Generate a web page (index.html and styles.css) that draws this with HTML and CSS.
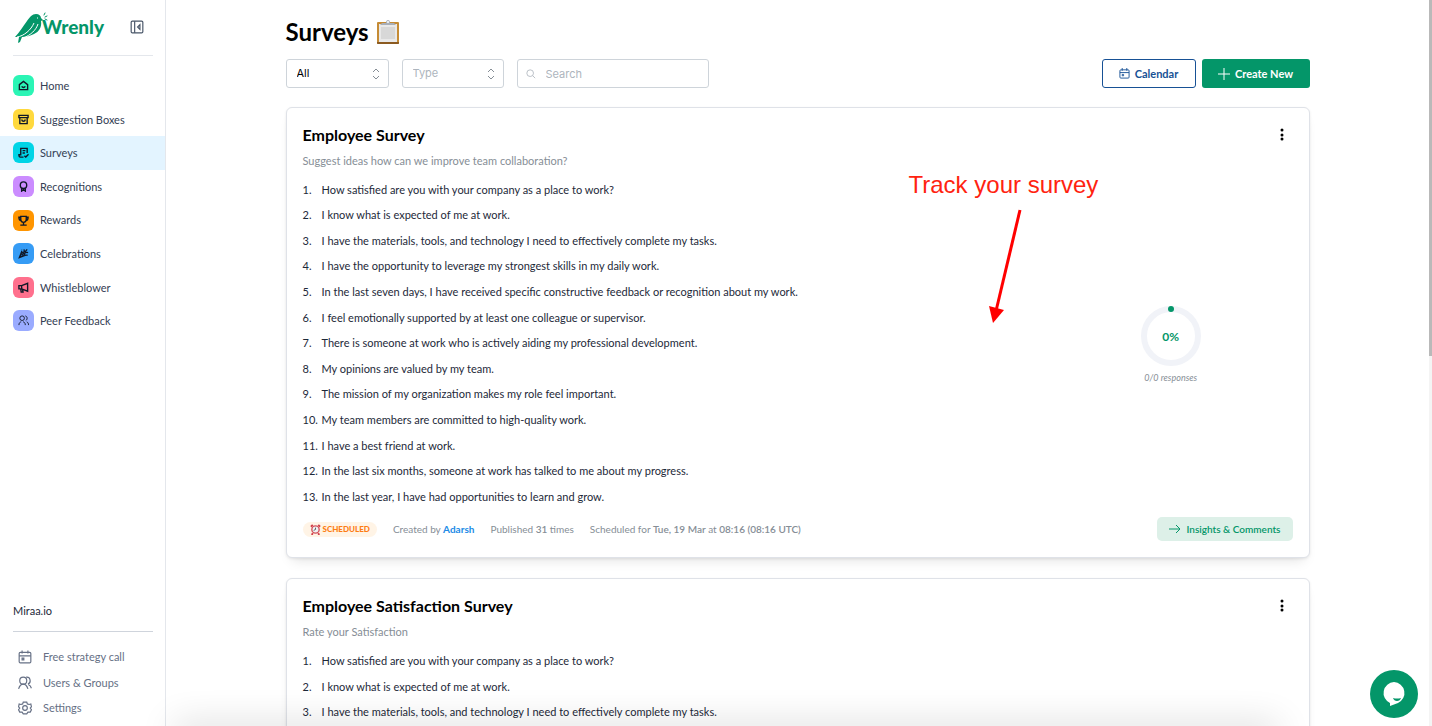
FILE: index.html
```
<!DOCTYPE html>
<html lang="en">
<head>
    <meta charset="UTF-8">
    <meta name="viewport" content="width=device-width, initial-scale=1.0">
    <title>Surveys - Wrenly</title>
    <link rel="stylesheet" href="styles.css">
</head>
<body>
    <aside class="sidebar">
        <div class="sidebar-header">
            <a href="#" class="logo">
                <svg class="logo-bird" viewBox="0 0 34 34" width="34" height="34">
                    <path fill="#049669" d="M1 27C6 22 9 16 13 11C16 7 18 4 22 4C25 4 27 6 27 8L29 10L27 11C28 17 25 22 20 24C16 26 12 27 8 27L6 32L4 33L5 27Z"/>
                    <path fill="none" stroke="#fff" stroke-width="1" d="M3 27C10 26 17 20 20 13M9 28C17 25 22 20 24 14"/>
                    <path fill="none" stroke="#fff" stroke-width="1" d="M23 8h1"/>
                    <path fill="none" stroke="#049669" stroke-width="1" stroke-linecap="round" d="M30 5L31 3M31 7L33 6M31 9L33 10"/>
                </svg>
                <span>Wrenly</span>
            </a>
            <button class="collapse" aria-label="Collapse sidebar">
                <svg class="line-icon" viewBox="0 0 24 24" width="14" height="14"><rect x="2" y="2" width="20" height="20" rx="2"/><path d="M8 2v20M17 8l-4 4 4 4z"/></svg>
            </button>
        </div>
        <nav class="menu">
            <a href="#"><span class="tile home"><svg class="line-icon" viewBox="0 0 24 24"><path d="M3 10L12 3l9 7v11H3zM8 14c2 3 6 3 8 0"/></svg></span>Home</a>
            <a href="#"><span class="tile boxes"><svg class="line-icon" viewBox="0 0 24 24"><path d="M2 3h20v5H2zM4 8v13h16V8M8 12c1 5 7 5 8 0"/></svg></span>Suggestion Boxes</a>
            <a href="#" class="active"><span class="tile surveys"><svg class="line-icon" viewBox="0 0 24 24"><path d="M20 13V3H6v14H2c0 3 1 5 3 5h7M10 8h6M10 13h5M14 19l3 3 6-6"/></svg></span>Surveys</a>
            <a href="#"><span class="tile recognitions"><svg class="line-icon" viewBox="0 0 24 24"><circle cx="12" cy="9" r="7"/><path d="M8 15v7l4-3 4 3v-7"/></svg></span>Recognitions</a>
            <a href="#"><span class="tile rewards"><svg class="line-icon" viewBox="0 0 24 24"><path d="M6 3h12v7a6 6 0 0 1-12 0zM6 5H2c0 5 1 7 5 7M18 5h4c0 5-1 7-5 7M12 16v5M5 22h14"/></svg></span>Rewards</a>
            <a href="#"><span class="tile celebrations"><svg class="line-icon" viewBox="0 0 24 24"><path d="M8 8L3 21l13-5zM7 12l5 5M5 16l3 3M12 10c2-2 2-4 1-7M14 12c3-3 5-3 8-2M15 9l5-6M18 15l3 1M8 4h1"/></svg></span>Celebrations</a>
            <a href="#"><span class="tile whistle"><svg class="line-icon" viewBox="0 0 24 24"><path d="M2 8v7h6l13 5V3L8 8zM8 8v7M6 15l1 7h4l-1-6"/></svg></span>Whistleblower</a>
            <a href="#"><span class="tile peer"><svg class="line-icon thin" viewBox="0 0 24 24"><circle cx="9" cy="7" r="5"/><path d="M2 22c0-5 3-7 5-7M16 22c0-5-3-7-5-7M16 2c5 1 5 8 1 10M19 15c3 1 4 4 4 7"/></svg></span>Peer Feedback</a>
        </nav>
        <div class="company">Miraa.io</div>
        <nav class="submenu">
            <a href="#"><svg class="line-icon" viewBox="0 0 24 24"><rect x="2" y="4" width="20" height="18" rx="2"/><path d="M2 10h20M7 1v5M17 1v5M7 14h3v3H7z"/></svg>Free strategy call</a>
            <a href="#"><svg class="line-icon" viewBox="0 0 24 24"><circle cx="9" cy="8" r="6"/><path d="M1 22c2-6 5-8 8-8s6 2 8 8M14 2c8-1 9 10 3 12M18 15c3 1 4 3 5 6"/></svg>Users &amp; Groups</a>
            <a href="#"><svg class="line-icon" viewBox="0 0 24 24"><path d="M9 2h6l1 3 3 1 3-1 1 5-2 2 2 3-2 4-4 0-2 3H9l-2-3-4 0-2-4 2-3-2-2 1-5 3 1 3-1z"/><circle cx="12" cy="12" r="4"/></svg>Settings</a>
        </nav>
    </aside>

    <main>
        <div class="content">
            <h1>Surveys
                <svg viewBox="0 0 22 24" width="22" height="24">
                    <rect x="0" y="2" width="22" height="22" rx="1" fill="#c58b35"/>
                    <path fill="#8b5a20" d="M0 22h22v1q0 1-1 1H1q-1 0-1-1z"/>
                    <rect x="2" y="4" width="18" height="18" fill="#e9e9e9"/>
                    <rect x="4" y="7" width="14" height="12" fill="#d8d8d8"/>
                    <path fill="#a9afb8" d="M3 5l2-2h4q0-3 2-3t2 3h4l2 2z"/>
                    <circle cx="11" cy="2" r="1" fill="#fff"/>
                </svg>
            </h1>
            <div class="toolbar">
                <div class="field select">
                    <select aria-label="Status"><option>All</option></select>
                    <svg class="line-icon" viewBox="0 0 8 12" width="8" height="12"><path d="M1 4l3-3 3 3M1 8l3 3 3-3"/></svg>
                </div>
                <div class="field select empty">
                    <select aria-label="Type"><option>Type</option></select>
                    <svg class="line-icon" viewBox="0 0 8 12" width="8" height="12"><path d="M1 4l3-3 3 3M1 8l3 3 3-3"/></svg>
                </div>
                <div class="field search">
                    <svg class="line-icon" viewBox="0 0 12 12" width="10" height="10"><circle cx="5" cy="5" r="4"/><path d="M8 8l3 3"/></svg>
                    <input type="text" placeholder="Search" aria-label="Search">
                </div>
                <button class="btn outline">
                    <svg class="line-icon" viewBox="0 0 24 24" width="11" height="11"><rect x="2" y="4" width="20" height="18" rx="2"/><path d="M2 10h20M7 0v6M17 0v6M7 14h3v3H7z"/></svg>
                    Calendar
                </button>
                <button class="btn primary">
                    <svg class="line-icon" viewBox="0 0 12 12" width="12" height="12"><path d="M6 0v12M0 6h12"/></svg>
                    Create New
                </button>
            </div>

            <section class="card">
                <div class="card-header">
                    <h2>Employee Survey</h2>
                    <button class="more" aria-label="More options"><svg viewBox="0 0 4 14" width="4" height="14"><circle cx="2" cy="2" r="1.500"/><circle cx="2" cy="7" r="1.500"/><circle cx="2" cy="11" r="1.500"/></svg></button>
                </div>
                <p class="description">Suggest ideas how can we improve team collaboration?</p>
                <div class="card-body">
                    <ol>
                        <li>How satisfied are you with your company as a place to work?</li>
                        <li>I know what is expected of me at work.</li>
                        <li>I have the materials, tools, and technology I need to effectively complete my tasks.</li>
                        <li>I have the opportunity to leverage my strongest skills in my daily work.</li>
                        <li>In the last seven days, I have received specific constructive feedback or recognition about my work.</li>
                        <li>I feel emotionally supported by at least one colleague or supervisor.</li>
                        <li>There is someone at work who is actively aiding my professional development.</li>
                        <li>My opinions are valued by my team.</li>
                        <li>The mission of my organization makes my role feel important.</li>
                        <li>My team members are committed to high-quality work.</li>
                        <li>I have a best friend at work.</li>
                        <li>In the last six months, someone at work has talked to me about my progress.</li>
                        <li>In the last year, I have had opportunities to learn and grow.</li>
                    </ol>
                    <div class="progress">
                        <div class="ring">
                            <svg viewBox="0 0 60 60" width="60" height="60"><circle cx="30" cy="30" r="27" fill="none" stroke="#f1f3f8" stroke-width="6"/><circle cx="30" cy="3" r="3" fill="#049669"/></svg>
                            <strong>0%</strong>
                        </div>
                        <em>0/0 responses</em>
                    </div>
                </div>
                <div class="card-footer">
                    <span class="badge">
                        <svg viewBox="0 0 12 12" width="11" height="11"><path d="M1 3l2-2M11 3L9 1M3 10l-1 2M9 10l1 2" stroke="#d33f49" stroke-width="2"/><circle cx="6" cy="6" r="4" fill="#eef2f4" stroke="#d3535c" stroke-width="1.500"/><path d="M6 4v2l-2 1" fill="none" stroke="#555"/></svg>
                        SCHEDULED
                    </span>
                    <span>Created by <a href="#">Adarsh</a></span>
                    <span>Published <b>31</b> times</span>
                    <span>Scheduled for <b>Tue, 19 Mar</b> at <b>08:16 (08:16 UTC)</b></span>
                    <button class="insights">
                        <svg class="line-icon" viewBox="0 0 12 10" width="12" height="10"><path d="M0 5h11M7 1l4 4-4 4"/></svg>
                        Insights &amp; Comments
                    </button>
                </div>
                <div class="annotation">
                    <span>Track your survey</span>
                    <svg viewBox="0 0 34 114" width="34" height="114"><path d="M31 1L7 102" stroke="#f00" stroke-width="3"/><path d="M0 97l15 4-11 13z" fill="#f00"/></svg>
                </div>
            </section>

            <section class="card">
                <div class="card-header">
                    <h2>Employee Satisfaction Survey</h2>
                    <button class="more" aria-label="More options"><svg viewBox="0 0 4 14" width="4" height="14"><circle cx="2" cy="2" r="1.500"/><circle cx="2" cy="7" r="1.500"/><circle cx="2" cy="11" r="1.500"/></svg></button>
                </div>
                <p class="description">Rate your Satisfaction</p>
                <div class="card-body">
                    <ol>
                        <li>How satisfied are you with your company as a place to work?</li>
                        <li>I know what is expected of me at work.</li>
                        <li>I have the materials, tools, and technology I need to effectively complete my tasks.</li>
                    </ol>
                </div>
            </section>
        </div>
    </main>
    <div class="scrollbar"><div class="thumb"></div></div>

    <div class="bottom-shade"></div>
    <button class="chat" aria-label="Open chat">
        <svg viewBox="0 0 24 26" width="24" height="26"><path fill="#fff" d="M12 1a11 11 0 0 1 4 21l-8 3v-3A11 11 0 0 1 12 1z"/><path fill="#049669" d="M11 17q4 1 8 0-1 3-4 3-3 0-4-3z"/></svg>
    </button>
</body>
</html>
```
FILE: styles.css
```
* {
    box-sizing: border-box;
}

body {
    display: flex;
    height: 100vh;
    margin: 0;
    overflow: hidden;
    font-family: Lato, "Liberation Sans", sans-serif;
    font-size: 12px;
    line-height: 1.6;
    color: #1d2939;
    background-color: #fff;
}

h1, h2, p, ol {
    margin: 0;
    padding: 0;
}

a {
    color: inherit;
    text-decoration: none;
}

b {
    font-weight: 600;
}

button, input, select {
    font: inherit;
    color: inherit;
}

button {
    padding: 0;
    border: none;
    background: none;
    cursor: pointer;
}

svg {
    display: block;
    flex-shrink: 0;
}

.line-icon {
    fill: none;
    stroke: currentColor;
    stroke-width: 2;
}

/* sidebar */
.sidebar {
    display: flex;
    flex-direction: column;
    flex-shrink: 0;
    width: 166px;
    padding-bottom: 9px;
    border-right: 1px solid #e4e7ec;
}

.sidebar-header {
    display: flex;
    justify-content: space-between;
    align-items: center;
    height: 56px;
    margin: 0 12px 13px 13px;
    padding: 0 9px 2px 1px;
    border-bottom: 1px solid #e4e7ec;
}

.logo {
    display: flex;
    align-items: center;
    font-size: 19px;
    font-weight: 900;
    line-height: 24px;
    color: #049669;
}

.logo-bird {
    margin-right: -6px;
}

.collapse {
    color: #475467;
}

.menu {
    font-size: 11px;
    color: #344054;
}

.menu a {
    display: flex;
    align-items: center;
    gap: 6px;
    padding: 8px 13px;
}

.menu a.active {
    background-color: #e3f4ff;
}

.tile {
    display: grid;
    place-items: center;
    width: 21px;
    height: 21px;
    margin: -2px 0;
    border-radius: 6px;
    color: #101828;
}

.tile svg {
    width: 11px;
    height: 11px;
    stroke-width: 3;
}

.tile .thin {
    stroke-width: 2;
}

.home { background-color: #2bf5b5; }
.boxes { background-color: #ffd93d; }
.surveys { background-color: #00d4e6; }
.recognitions { background-color: #cb8cff; }
.rewards { background-color: #ff9500; }
.celebrations { background-color: #369cf5; }
.whistle { background-color: #ff708d; }
.peer { background-color: #9aabff; }

.company {
    margin: auto 12px 16px 13px;
    padding-bottom: 12px;
    border-bottom: 1px solid #cfd4dc;
    font-size: 11px;
}

.submenu {
    display: grid;
    gap: 8px;
    padding-left: 18px;
    font-size: 11px;
    color: #667085;
}

.submenu a {
    display: flex;
    align-items: center;
    gap: 11px;
}

.submenu svg {
    width: 14px;
    height: 14px;
}

/* page */
main {
    flex: 1;
    min-width: 0;
    overflow: hidden;
}

.content {
    max-width: 1024px;
    margin: 0 auto;
    padding-top: 14px;
}

h1 {
    display: flex;
    align-items: center;
    gap: 8px;
    margin-bottom: 9px;
    font-size: 24px;
    line-height: 36px;
    color: #000;
}

.toolbar {
    display: flex;
    gap: 13px;
    margin-bottom: 19px;
    font-family: Inter, sans-serif;
    font-size: 11px;
}

.field {
    display: flex;
    align-items: center;
    width: 103px;
    height: 29px;
    border: 1px solid #ced4da;
    border-radius: 3px;
    color: #adb5bd;
}

.field select,
.field input {
    flex: 1;
    min-width: 0;
    height: 27px;
    padding: 0 10px;
    border: none;
    outline: none;
    background: none;
    appearance: none;
    color: #000;
}

.field.empty {
    width: 102px;
}

.field.empty select,
.field input::placeholder {
    color: #adb5bd;
}

.field svg {
    margin: 0 8px;
    stroke-width: 1;
}

.select svg {
    color: #868e96;
}

.field.search {
    width: 192px;
    margin-right: auto;
}

.field.search input {
    padding: 0 2px;
}

.btn {
    display: flex;
    justify-content: center;
    align-items: center;
    gap: 5px;
    width: 108px;
    height: 29px;
    border-radius: 3px;
    font-family: Lato, sans-serif;
    font-weight: 700;
}

.btn.outline {
    width: 94px;
    margin-right: -7px;
    border: 1px solid #175195;
    color: #175195;
}

.btn.primary {
    background-color: #049669;
    color: #fff;
}

.primary svg,
.insights svg {
    stroke-width: 1;
}

/* survey cards */
.card {
    position: relative;
    margin-bottom: 20px;
    padding: 16px;
    border: 1px solid #dfe2e8;
    border-radius: 6px;
    background-color: #fff;
    box-shadow: 0 1px 3px rgba(0,0,0,0.08), 0 8px 12px -6px rgba(0,0,0,0.12);
}

.card-header {
    display: flex;
    justify-content: space-between;
    align-items: center;
    padding-right: 9px;
}

h2 {
    font-size: 16px;
    line-height: 22px;
    color: #000;
}

.description {
    margin: 6px 0 11px;
    font-size: 11px;
    color: #868e96;
}

.card-body {
    display: grid;
    grid-template-columns: 3fr 1fr;
    font-size: 11px;
}

ol {
    display: grid;
    gap: 8px;
    list-style: none;
    counter-reset: question;
}

ol li {
    display: flex;
    counter-increment: question;
}

ol li::before {
    content: counter(question) ".";
    width: 19px;
}

.progress {
    display: flex;
    flex-direction: column;
    justify-content: center;
    align-items: center;
    gap: 5px;
    padding: 6px 0 0 4px;
}

.progress em {
    font-size: 9px;
    color: #868e96;
}

.ring {
    display: grid;
    place-items: center;
}

.ring > * {
    grid-area: 1 / 1;
}

.ring strong {
    font-size: 12px;
    color: #049669;
}

.card-footer {
    display: flex;
    align-items: center;
    gap: 16px;
    margin-top: 12px;
    font-size: 10px;
    color: #868e96;
}

.card-footer a {
    font-weight: 700;
    color: #228be6;
}

.badge {
    display: flex;
    align-items: center;
    gap: 2px;
    height: 15px;
    padding: 0 7px;
    border-radius: 8px;
    background-color: #fff4e6;
    font-size: 8px;
    font-weight: 900;
    color: #fd7e14;
}

.insights {
    display: flex;
    align-items: center;
    gap: 6px;
    height: 24px;
    margin-left: auto;
    padding: 0 12px;
    border-radius: 5px;
    background-color: #ddf0e8;
    font-weight: 600;
    color: #049669;
}

.annotation {
    position: absolute;
    top: 62px;
    left: 622px;
    font-family: "Liberation Sans", Arial, sans-serif;
    font-size: 24px;
    line-height: 30px;
    color: #ff2310;
}

.annotation svg {
    margin: 9px 0 0 80px;
}

.scrollbar {
    width: 3px;
    background-color: #f4f4f4;
}

.thumb {
    height: 49%;
    background-color: #b9b9b9;
}

.bottom-shade {
    position: fixed;
    right: 160px;
    bottom: -8px;
    left: 180px;
    height: 1px;
    box-shadow: 0 0 36px 6px rgba(0,0,0,0.24);
}

.chat {
    position: fixed;
    right: 14px;
    bottom: 8px;
    display: grid;
    place-items: center;
    width: 48px;
    height: 48px;
    border-radius: 50%;
    background-color: #049669;
}
```
